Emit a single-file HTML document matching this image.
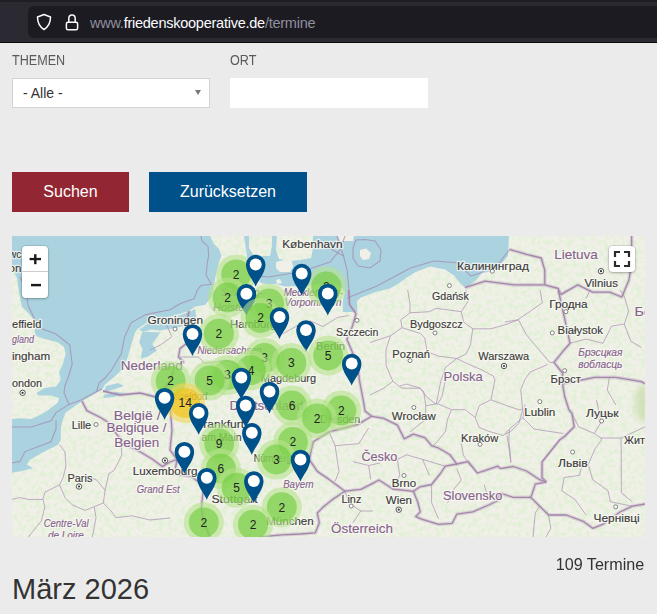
<!DOCTYPE html>
<html><head><meta charset="utf-8">
<style>
html,body{margin:0;padding:0;}
body{width:657px;height:614px;overflow:hidden;background:#ebebeb;font-family:"Liberation Sans",sans-serif;position:relative;}
.abs{position:absolute;}
#bar{left:0;top:0;width:657px;height:42px;background:#2b2a33;}
#bar .line{left:0;top:42px;width:657px;height:1px;background:#0c0c0d;}
#url{left:28px;top:6px;width:640px;height:32px;background:#1c1b22;border-radius:6px;}
#urltext{left:90px;top:15.4px;font-size:14.5px;color:#8f8f9d;white-space:nowrap;letter-spacing:-0.25px;}
#urltext b{font-weight:normal;color:#fbfbfe;}
.lbl{font-size:14px;color:#5a5a5a;top:51.5px;transform:scaleX(0.9);transform-origin:0 0;}
#sel{left:12px;top:78px;width:196px;height:28px;background:#fff;border:1px solid #d3d3d3;}
#sel span{position:absolute;left:10px;top:6px;font-size:14px;color:#333;}
#sel i{position:absolute;right:8.5px;top:11px;width:0;height:0;border-left:3.8px solid transparent;border-right:3.8px solid transparent;border-top:5.5px solid #777;}
#ort{left:230px;top:78px;width:198px;height:30px;background:#fff;}
.btn{top:172px;height:40px;color:#fff;font-size:16px;text-align:center;line-height:39px;}
#b1{left:12px;width:117px;background:#922733;}
#b2{left:149px;width:158px;background:#00508a;}
#map{left:12px;top:236px;width:633px;height:301px;background:#aad3df;overflow:hidden;}
#count{right:12.5px;top:554.8px;font-size:17px;color:#333;transform:scaleX(0.95);transform-origin:100% 0;}
#month{left:12px;top:573px;font-size:29px;color:#333;}
#zc{left:10px;top:10px;width:26px;height:52px;background:#fff;border-radius:4px;box-shadow:0 0 0 1px rgba(0,0,0,0.08),0 1px 3px rgba(0,0,0,0.25);}
#zc .zb{height:26px;line-height:26px;text-align:center;font-size:20px;font-weight:bold;color:#000;}
#zc .zb:first-child{border-bottom:1px solid #ccc;height:25px;}
#fs{left:597px;top:10px;width:26px;height:26px;background:#fff;border-radius:4px;box-shadow:0 0 0 1px rgba(0,0,0,0.08),0 1px 3px rgba(0,0,0,0.25);}
</style></head><body>
<div id="bar" class="abs">
  <div class="abs" style="left:0;top:0;width:657px;height:2px;background:#1f1e25"></div><div id="url" class="abs"></div>
  <div class="line abs"></div>
  <svg class="abs" style="left:34px;top:12px" width="20" height="20" viewBox="0 0 20 20"><path d="M10 2.5 L16.5 5 Q16.5 13.5 10 17.5 Q3.5 13.5 3.5 5 Z" fill="none" stroke="#fbfbfe" stroke-width="1.5" stroke-linejoin="round"/></svg>
  <svg class="abs" style="left:64px;top:12px" width="16" height="20" viewBox="0 0 16 20"><rect x="2.4" y="10.2" width="11.2" height="7.6" rx="1.6" fill="none" stroke="#fbfbfe" stroke-width="1.5"/><path d="M4.8 10.2 V6.6 Q4.8 3 8 3 Q11.2 3 11.2 6.6 V10.2" fill="none" stroke="#fbfbfe" stroke-width="1.5"/></svg>
  <div id="urltext" class="abs">www.<b>friedenskooperative.de</b>/termine</div>
</div>
<div class="abs lbl" style="left:12px">THEMEN</div>
<div class="abs lbl" style="left:230px">ORT</div>
<div id="sel" class="abs"><span>- Alle -</span><i></i></div>
<div id="ort" class="abs"></div>
<div id="b1" class="abs btn">Suchen</div>
<div id="b2" class="abs btn">Zurücksetzen</div>
<div id="map" class="abs">
<svg width="633" height="301" viewBox="12 236 633 301" style="position:absolute;left:0;top:0">
<rect x="12" y="236" width="633" height="301" fill="#f1f0e8"/>
<filter id="tex" x="0" y="0" width="100%" height="100%"><feTurbulence type="fractalNoise" baseFrequency="0.22" numOctaves="3" seed="7"/><feColorMatrix type="matrix" values="0 0 0 0 0.76  0 0 0 0 0.87  0 0 0 0 0.68  4.5 0 0 0 -1.95"/></filter>
<rect x="12" y="236" width="633" height="301" filter="url(#tex)"/>
<filter id="bl" x="-50%" y="-50%" width="200%" height="200%"><feGaussianBlur stdDeviation="3"/></filter><ellipse cx="643" cy="403" rx="8" ry="19" fill="#c6dca8" opacity="0.7" filter="url(#bl)"/>
<polygon points="12,236 210,236 214,244 219,249 221.5,255.5 219,262 216.5,272 214,284 212,296 205,305 195,306.5 190,310.5 173,316 149,321 137.6,329 135,332.5 131,345.6 127.8,357 122.9,368.4 114.8,376.5 105,384.6 102,389.8 82,401.2 65.7,412.6 62.5,420.7 60.8,428.8 60.8,440.2 57.6,445.1 44.5,451.6 29.9,459.8 26.6,464.6 33.2,468 21.8,471.1 12,472.8 12,419 20,418.2 31.5,419 41.3,414.2 49.4,409.3 57.6,402.8 59.2,397.9 51,395.5 38,395.5 36.4,393 44.5,388 56,386.5 60.8,380 59,372 62.5,365 65.7,353.7 64,347 57.6,342.3 44.6,339 36,336 34.8,332.6 34.8,321 28.3,313 22,307 19,292 17,278 12,268" fill="#aad3df"/>
<polygon points="244,236 249,236 249,248 254,256 270,256 272,246 272,236 277,236 276,250 279,259 290,261 300,260 311,258 312.7,250 313,236 509,236 508,256 502,263 494,271 482,273 476,280 470,285 465,287.7 460,283 454,275.6 445,269.5 430,266.4 415.8,272 406.7,277.4 399.4,282.9 390.3,288.4 375.7,292 361,297.5 357,301 357.4,312 342.8,312 342.8,301 345,292 339,285 325,284 312,285 300,286 285,286.5 276,284 266,284 261,283 254,272 248,262 246,250" fill="#aad3df"/>
<polygon points="195,309 190,311.5 173,317.5 149,322.5 139,330 143,331.5 152,329.5 160,330.5 175,328 188,325 197,320" fill="#aad3df"/>
<polygon points="142.4,331.5 160.3,332.5 152.2,344 157,350.5 147.3,357 140.8,358.6 142.4,348.8 139.2,342.3" fill="#aad3df"/>
<polygon points="106,386 118,383 124,386 112,390 104,392" fill="#aad3df"/>
<polygon points="104,395 116,392 126,393 114,397 103,398" fill="#aad3df"/>
<polygon points="360,250 366,248.6 371,253 369,259 363,260 360,256" fill="#f1f0e8"/>
<polygon points="276,262 284,260 292,261 293,267 290,272 280,272 276,268" fill="#f1f0e8"/>
<polygon points="276,280 280,279 282,283 277,284" fill="#f1f0e8"/>
<polygon points="338,236 354,236 353,241 340,241" fill="#f1f0e8"/>
<polyline points="180,303.8 170,309.8 145.7,314.6 131,322.8 124.5,337.4 121.3,353.7 111.5,370 105,378 99,383 96.6,391.4" fill="none" stroke="#a48bb0" stroke-opacity="0.75" stroke-width="1.1"/>
<polyline points="20,277 26,290 28,305 34,318 40,328 56,334 69.7,344.7 72.2,364.2 69,375 64.9,386 64,393 69,404.4 56,412.6 51,420.7 31.5,427 12,427" fill="none" stroke="#a48bb0" stroke-opacity="0.75" stroke-width="1.1"/>
<polyline points="12,463 20,461.4 25,451.6 51,441.8 56,428.8 56,420" fill="none" stroke="#a48bb0" stroke-opacity="0.75" stroke-width="1.1"/>
<polyline points="69,404.4 80.4,400.3 96.6,391.4 102,389" fill="none" stroke="#a48bb0" stroke-opacity="0.75" stroke-width="1.1"/>
<polyline points="200.8,236 202,241 208,246.4 208.7,255.5 207.4,262 206,275 211.3,284.2 200.8,285.5 197,290.7 194.3,298.5 180,303.8" fill="none" stroke="#a48bb0" stroke-opacity="0.75" stroke-width="1.1"/>
<polyline points="337,236 343.5,256 347,269.5 350,299.6" fill="none" stroke="#a48bb0" stroke-opacity="0.75" stroke-width="1.1"/>
<polyline points="347,298 377,286 410.5,268 434,261 457,262.8 470.8,276 481,272.8 500,262 509,250" fill="none" stroke="#a48bb0" stroke-opacity="0.75" stroke-width="1.1"/>
<polyline points="320,242.7 343.5,256" fill="none" stroke="#a48bb0" stroke-opacity="0.75" stroke-width="1.1"/>
<polyline points="353,248 356,240 365,239.5 375,241 381,250 380,261 370,268 358,266 353,258 353,248" fill="none" stroke="#a48bb0" stroke-opacity="0.75" stroke-width="1.1"/>
<polyline points="248,275 268,277 300,272 330,262 340,250 345,236" fill="none" stroke="#a48bb0" stroke-opacity="0.75" stroke-width="1.1"/>
<polyline points="456.8,358.5 465.9,363 481.9,370 493.3,376 495,380 493,389.9 491,399.8 479.2,405.7 475.2,417.6 465.3,409.7 451.5,409.7 437.6,403.7" fill="none" stroke="#ad95b5" stroke-opacity="0.8" stroke-width="0.95" stroke-linejoin="round"/>
<polyline points="547.6,364.6 530,372 524.7,380 520.7,389.9 522.7,409.7 518.7,423.5 510.8,431.4 502.9,435.4 489,431.4 479.2,427.5 475.2,417.6" fill="none" stroke="#ad95b5" stroke-opacity="0.8" stroke-width="0.95" stroke-linejoin="round"/>
<polyline points="445.5,380 441.6,397.8 437.6,403.7 425.7,405.7 423.8,391.9 419.8,387.9 406,384 400,386" fill="none" stroke="#ad95b5" stroke-opacity="0.8" stroke-width="0.95" stroke-linejoin="round"/>
<polyline points="451.5,409.7 447.5,419.6 445.5,431.4 437.6,441.3 433.6,445.3" fill="none" stroke="#ad95b5" stroke-opacity="0.8" stroke-width="0.95" stroke-linejoin="round"/>
<polyline points="491,399.8 506.9,405.7 518.7,409.7 522.7,409.7" fill="none" stroke="#ad95b5" stroke-opacity="0.8" stroke-width="0.95" stroke-linejoin="round"/>
<polyline points="506.9,435.4 508.9,447.3 510.8,463" fill="none" stroke="#ad95b5" stroke-opacity="0.8" stroke-width="0.95" stroke-linejoin="round"/>
<polyline points="461.4,443.3 463.3,455.1 471.2,467" fill="none" stroke="#ad95b5" stroke-opacity="0.8" stroke-width="0.95" stroke-linejoin="round"/>
<polyline points="425.7,405.7 425.7,419.6 416,427 410,432" fill="none" stroke="#ad95b5" stroke-opacity="0.8" stroke-width="0.95" stroke-linejoin="round"/>
<polyline points="180,357 198.6,357 205,363.6 225.3,360 240,365 250,380" fill="none" stroke="#ad95b5" stroke-opacity="0.8" stroke-width="0.95" stroke-linejoin="round"/>
<polyline points="282.9,333.8 295.7,326.5 310.3,321 323,326.5 337.7,317.4 348.6,315.6" fill="none" stroke="#ad95b5" stroke-opacity="0.8" stroke-width="0.95" stroke-linejoin="round"/>
<polyline points="166.7,325 171.8,336.8 160,345.2 150,350" fill="none" stroke="#ad95b5" stroke-opacity="0.8" stroke-width="0.95" stroke-linejoin="round"/>
<polyline points="407.7,290 410,303.7 410,312.8 400.8,319.7 402,327.7 390.5,335.7 370,342.5" fill="none" stroke="#ad95b5" stroke-opacity="0.8" stroke-width="0.95" stroke-linejoin="round"/>
<polyline points="410,312.8 429.4,311.7 436.2,308.3 461.3,311.7 463.6,322 472.7,328.8 470.5,344.8 465.9,354 456.8,358.5 438.5,356.2 427,351.6 424.8,338 420.2,333.4 402,327.7" fill="none" stroke="#ad95b5" stroke-opacity="0.8" stroke-width="0.95" stroke-linejoin="round"/>
<polyline points="390.5,335.7 386,349.4 386,365.3 392.8,381.3 402,388.2 420.2,388.2 427,397.3 436.2,404.2 440.8,381.3 445.3,367.6 456.8,358.5" fill="none" stroke="#ad95b5" stroke-opacity="0.8" stroke-width="0.95" stroke-linejoin="round"/>
<polyline points="461.3,311.7 468,301.4 466,290" fill="none" stroke="#ad95b5" stroke-opacity="0.8" stroke-width="0.95" stroke-linejoin="round"/>
<polyline points="472.7,328.8 491,328.8 507,324.2 518.4,319.7 526.3,334.7 537,347.5 549.7,362.4 554,362.4" fill="none" stroke="#ad95b5" stroke-opacity="0.8" stroke-width="0.95" stroke-linejoin="round"/>
<polyline points="505,322 517.8,319.8 542.3,302.8 540,290" fill="none" stroke="#ad95b5" stroke-opacity="0.8" stroke-width="0.95" stroke-linejoin="round"/>
<polyline points="370,395 383.7,388.2 392.8,381.3" fill="none" stroke="#ad95b5" stroke-opacity="0.8" stroke-width="0.95" stroke-linejoin="round"/>
<polyline points="586,298.5 590.2,290" fill="none" stroke="#ad95b5" stroke-opacity="0.8" stroke-width="0.95" stroke-linejoin="round"/>
<polyline points="570,343.3 586,339 603,343.3 611.5,326.2 624.3,324 628.6,311.3 624.3,296.4 620,290" fill="none" stroke="#ad95b5" stroke-opacity="0.8" stroke-width="0.95" stroke-linejoin="round"/>
<polyline points="624.3,324 630.7,341.1 641.4,347.5" fill="none" stroke="#ad95b5" stroke-opacity="0.8" stroke-width="0.95" stroke-linejoin="round"/>
<polyline points="609.4,377.4 607.3,390 615.8,405" fill="none" stroke="#ad95b5" stroke-opacity="0.8" stroke-width="0.95" stroke-linejoin="round"/>
<polyline points="370,457 397.4,459.4 406.5,454.8 422.5,459.4 445.3,466.2" fill="none" stroke="#ad95b5" stroke-opacity="0.8" stroke-width="0.95" stroke-linejoin="round"/>
<polyline points="397.4,459.4 399.7,475.3 392.8,489" fill="none" stroke="#ad95b5" stroke-opacity="0.8" stroke-width="0.95" stroke-linejoin="round"/>
<polyline points="422.5,459.4 429.4,475.3" fill="none" stroke="#ad95b5" stroke-opacity="0.8" stroke-width="0.95" stroke-linejoin="round"/>
<polyline points="456.8,468.5 461.3,480 452.2,491.3 447.6,502.7" fill="none" stroke="#ad95b5" stroke-opacity="0.8" stroke-width="0.95" stroke-linejoin="round"/>
<polyline points="431.6,484.5 431.6,502.7 438.5,518.7" fill="none" stroke="#ad95b5" stroke-opacity="0.8" stroke-width="0.95" stroke-linejoin="round"/>
<polyline points="484.2,484.5 488.7,500.5" fill="none" stroke="#ad95b5" stroke-opacity="0.8" stroke-width="0.95" stroke-linejoin="round"/>
<polyline points="572,413.4 578.7,426.8 594.3,433.5 601,438 601.5,440 595,448.8 588.3,464.3 581.7,466.5 579.5,475.3 564,477.5 561.8,490.8 575,499.6 586,515" fill="none" stroke="#ad95b5" stroke-opacity="0.8" stroke-width="0.95" stroke-linejoin="round"/>
<polyline points="588.3,464.3 592.7,479.7 608.1,490.8 610.4,501.8 632.4,506.2" fill="none" stroke="#ad95b5" stroke-opacity="0.8" stroke-width="0.95" stroke-linejoin="round"/>
<polyline points="539.7,506.2 535.3,512.8 533,537" fill="none" stroke="#ad95b5" stroke-opacity="0.8" stroke-width="0.95" stroke-linejoin="round"/>
<polyline points="548.6,515 550.8,528.3 546,537" fill="none" stroke="#ad95b5" stroke-opacity="0.8" stroke-width="0.95" stroke-linejoin="round"/>
<polyline points="601,438 621.1,438 645,426.8" fill="none" stroke="#ad95b5" stroke-opacity="0.8" stroke-width="0.95" stroke-linejoin="round"/>
<polyline points="621.1,438 621.4,493 632.4,501.8" fill="none" stroke="#ad95b5" stroke-opacity="0.8" stroke-width="0.95" stroke-linejoin="round"/>
<polyline points="596.5,400 601,422.3 594.3,433.5" fill="none" stroke="#ad95b5" stroke-opacity="0.8" stroke-width="0.95" stroke-linejoin="round"/>
<polyline points="505,433.5 509.5,429 522.9,417.9 534,429 563,433.5" fill="none" stroke="#ad95b5" stroke-opacity="0.8" stroke-width="0.95" stroke-linejoin="round"/>
<polyline points="509.5,429 508.8,440 511,462" fill="none" stroke="#ad95b5" stroke-opacity="0.8" stroke-width="0.95" stroke-linejoin="round"/>
<polyline points="522.9,417.9 525,404.5" fill="none" stroke="#ad95b5" stroke-opacity="0.8" stroke-width="0.95" stroke-linejoin="round"/>
<polyline points="329.1,431.9 335.1,445.7 339,471.4 335.1,481.3" fill="none" stroke="#ad95b5" stroke-opacity="0.8" stroke-width="0.95" stroke-linejoin="round"/>
<polyline points="335.1,445.7 358.8,443.7 368.7,428" fill="none" stroke="#ad95b5" stroke-opacity="0.8" stroke-width="0.95" stroke-linejoin="round"/>
<polyline points="352.9,461.6 368.7,465.5 380,463" fill="none" stroke="#ad95b5" stroke-opacity="0.8" stroke-width="0.95" stroke-linejoin="round"/>
<polyline points="368.7,465.5 370.7,479.4" fill="none" stroke="#ad95b5" stroke-opacity="0.8" stroke-width="0.95" stroke-linejoin="round"/>
<polyline points="345,491.2 349,503.1 360.8,511 372.7,511" fill="none" stroke="#ad95b5" stroke-opacity="0.8" stroke-width="0.95" stroke-linejoin="round"/>
<polyline points="360.8,511 352.9,522.9" fill="none" stroke="#ad95b5" stroke-opacity="0.8" stroke-width="0.95" stroke-linejoin="round"/>
<polyline points="59.5,444.6 65,452 65.9,466.5 63.1,477.5 59.5,484.8 44.9,492.1 43,499.4 28.4,499.4 19.3,497.6 12,499.4" fill="none" stroke="#ad95b5" stroke-opacity="0.8" stroke-width="0.95" stroke-linejoin="round"/>
<polyline points="59.5,484.8 65,497.6 72.3,504.9 85,510.4 94.2,506.7 103.3,503 105.1,490.3 96,479.3 85,477" fill="none" stroke="#ad95b5" stroke-opacity="0.8" stroke-width="0.95" stroke-linejoin="round"/>
<polyline points="121.6,441 121.6,455.6 114.3,470.2 108.8,473.8 105.1,490.3" fill="none" stroke="#ad95b5" stroke-opacity="0.8" stroke-width="0.95" stroke-linejoin="round"/>
<polyline points="94.2,506.7 96,517.7 92.4,537" fill="none" stroke="#ad95b5" stroke-opacity="0.8" stroke-width="0.95" stroke-linejoin="round"/>
<polyline points="43,499.4 44.9,506.7 41.2,521.3 32.1,532.3 28.4,537" fill="none" stroke="#ad95b5" stroke-opacity="0.8" stroke-width="0.95" stroke-linejoin="round"/>
<polyline points="103.3,503 110.6,510.4 116.1,517.7 132,515.8 150,520 170,518" fill="none" stroke="#ad95b5" stroke-opacity="0.8" stroke-width="0.95" stroke-linejoin="round"/>
<polyline points="82,401 86.8,410.6 101.4,418 108.7,422.8 118,436 125.8,444.7 140.4,452 152.5,459.3 162.3,466.6 170,462 177,459.3 174.5,474 191.5,476.4 203.7,486 201.3,508 203.7,522.6 210,537" fill="none" stroke="#c2aac6" stroke-opacity="0.45" stroke-width="3.6" stroke-linejoin="round"/>
<polyline points="82,401 86.8,410.6 101.4,418 108.7,422.8 118,436 125.8,444.7 140.4,452 152.5,459.3 162.3,466.6 170,462 177,459.3 174.5,474 191.5,476.4 203.7,486 201.3,508 203.7,522.6 210,537" fill="none" stroke="#9d80a5" stroke-opacity="0.9" stroke-width="1.3" stroke-linejoin="round"/>
<polyline points="103,391 120,395 140,393 160,398 170,405" fill="none" stroke="#c2aac6" stroke-opacity="0.45" stroke-width="3.6" stroke-linejoin="round"/>
<polyline points="103,391 120,395 140,393 160,398 170,405" fill="none" stroke="#9d80a5" stroke-opacity="0.9" stroke-width="1.3" stroke-linejoin="round"/>
<polyline points="189,311 186,325 188.5,341.9 180,348.6 178.5,357 183.5,362 173.4,367 171.8,378.7 165,388 170,405" fill="none" stroke="#c2aac6" stroke-opacity="0.45" stroke-width="3.6" stroke-linejoin="round"/>
<polyline points="189,311 186,325 188.5,341.9 180,348.6 178.5,357 183.5,362 173.4,367 171.8,378.7 165,388 170,405" fill="none" stroke="#9d80a5" stroke-opacity="0.9" stroke-width="1.3" stroke-linejoin="round"/>
<polyline points="170,405 172,430 170,450 177,459.3" fill="none" stroke="#c2aac6" stroke-opacity="0.45" stroke-width="3.6" stroke-linejoin="round"/>
<polyline points="170,405 172,430 170,450 177,459.3" fill="none" stroke="#9d80a5" stroke-opacity="0.9" stroke-width="1.3" stroke-linejoin="round"/>
<polyline points="348.6,290 349.5,304.6 356,313.7 352.3,326.5 346.8,339.3 352.3,352 357.8,366.7 359.6,381.3 363.2,400 365,411 371.7,416.3" fill="none" stroke="#c2aac6" stroke-opacity="0.45" stroke-width="3.6" stroke-linejoin="round"/>
<polyline points="348.6,290 349.5,304.6 356,313.7 352.3,326.5 346.8,339.3 352.3,352 357.8,366.7 359.6,381.3 363.2,400 365,411 371.7,416.3" fill="none" stroke="#9d80a5" stroke-opacity="0.9" stroke-width="1.3" stroke-linejoin="round"/>
<polyline points="371.7,416.3 383.7,418.3 397.4,425.1 404.2,438.8 413.4,434.2 424.8,437.7 431.6,445.7 438.5,448 450,454.8 456.8,464 468.2,461.6 477.3,473 484.2,470.8 497.9,466.2 500,468.7" fill="none" stroke="#c2aac6" stroke-opacity="0.45" stroke-width="3.6" stroke-linejoin="round"/>
<polyline points="371.7,416.3 383.7,418.3 397.4,425.1 404.2,438.8 413.4,434.2 424.8,437.7 431.6,445.7 438.5,448 450,454.8 456.8,464 468.2,461.6 477.3,473 484.2,470.8 497.9,466.2 500,468.7" fill="none" stroke="#9d80a5" stroke-opacity="0.9" stroke-width="1.3" stroke-linejoin="round"/>
<polyline points="371.7,416.3 358,424.4 336.3,430 329.1,431.9 313.3,441.8 311.3,449.7 309.4,459.6 317.3,471.4 329.1,479.4 337,485.3 345,491.2" fill="none" stroke="#c2aac6" stroke-opacity="0.45" stroke-width="3.6" stroke-linejoin="round"/>
<polyline points="371.7,416.3 358,424.4 336.3,430 329.1,431.9 313.3,441.8 311.3,449.7 309.4,459.6 317.3,471.4 329.1,479.4 337,485.3 345,491.2" fill="none" stroke="#9d80a5" stroke-opacity="0.9" stroke-width="1.3" stroke-linejoin="round"/>
<polyline points="345,491.2 360.8,489.3 372.7,483.3 379,480 392.8,489 413.4,491.3" fill="none" stroke="#c2aac6" stroke-opacity="0.45" stroke-width="3.6" stroke-linejoin="round"/>
<polyline points="345,491.2 360.8,489.3 372.7,483.3 379,480 392.8,489 413.4,491.3" fill="none" stroke="#9d80a5" stroke-opacity="0.9" stroke-width="1.3" stroke-linejoin="round"/>
<polyline points="345,491.2 333.1,499.1 323.2,507 317.3,513 319.3,522.9 315.3,532.8 300,534 281.7,534.8 260,537" fill="none" stroke="#c2aac6" stroke-opacity="0.45" stroke-width="3.6" stroke-linejoin="round"/>
<polyline points="345,491.2 333.1,499.1 323.2,507 317.3,513 319.3,522.9 315.3,532.8 300,534 281.7,534.8 260,537" fill="none" stroke="#9d80a5" stroke-opacity="0.9" stroke-width="1.3" stroke-linejoin="round"/>
<polyline points="413.4,491.3 420.2,486.8 431.6,484.5 440.8,473 445.3,466.2 456.8,464" fill="none" stroke="#c2aac6" stroke-opacity="0.45" stroke-width="3.6" stroke-linejoin="round"/>
<polyline points="413.4,491.3 420.2,486.8 431.6,484.5 440.8,473 445.3,466.2 456.8,464" fill="none" stroke="#9d80a5" stroke-opacity="0.9" stroke-width="1.3" stroke-linejoin="round"/>
<polyline points="413.4,491.3 418,502.7 420.2,511.9 415.7,516.4 420.2,518.7 438.5,524.4 452.2,523.3 456.8,514.2 472.7,511.9 488.7,505 497.9,500.5 500,493" fill="none" stroke="#c2aac6" stroke-opacity="0.45" stroke-width="3.6" stroke-linejoin="round"/>
<polyline points="413.4,491.3 418,502.7 420.2,511.9 415.7,516.4 420.2,518.7 438.5,524.4 452.2,523.3 456.8,514.2 472.7,511.9 488.7,505 497.9,500.5 500,493" fill="none" stroke="#9d80a5" stroke-opacity="0.9" stroke-width="1.3" stroke-linejoin="round"/>
<polyline points="569,410 572,413.4 574.2,426.8 565.3,435.7 559.6,440 542,462 542,477.5 546.3,482" fill="none" stroke="#c2aac6" stroke-opacity="0.45" stroke-width="3.6" stroke-linejoin="round"/>
<polyline points="569,410 572,413.4 574.2,426.8 565.3,435.7 559.6,440 542,462 542,477.5 546.3,482" fill="none" stroke="#9d80a5" stroke-opacity="0.9" stroke-width="1.3" stroke-linejoin="round"/>
<polyline points="546.3,482 535.3,484.1 530.9,497.4 539.7,506.2 548.6,515 566.2,515 583.9,521.7 592.7,528.3 603.7,523.9 620,512 632.4,506.2 645,504" fill="none" stroke="#c2aac6" stroke-opacity="0.45" stroke-width="3.6" stroke-linejoin="round"/>
<polyline points="546.3,482 535.3,484.1 530.9,497.4 539.7,506.2 548.6,515 566.2,515 583.9,521.7 592.7,528.3 603.7,523.9 620,512 632.4,506.2 645,504" fill="none" stroke="#9d80a5" stroke-opacity="0.9" stroke-width="1.3" stroke-linejoin="round"/>
<polyline points="500,468.7 513.2,466.5 526.5,471 539.7,479.7 546.3,482" fill="none" stroke="#c2aac6" stroke-opacity="0.45" stroke-width="3.6" stroke-linejoin="round"/>
<polyline points="500,468.7 513.2,466.5 526.5,471 539.7,479.7 546.3,482" fill="none" stroke="#9d80a5" stroke-opacity="0.9" stroke-width="1.3" stroke-linejoin="round"/>
<polyline points="500,493 513.2,497.4 530.9,497.4" fill="none" stroke="#c2aac6" stroke-opacity="0.45" stroke-width="3.6" stroke-linejoin="round"/>
<polyline points="500,493 513.2,497.4 530.9,497.4" fill="none" stroke="#9d80a5" stroke-opacity="0.9" stroke-width="1.3" stroke-linejoin="round"/>
<polyline points="562.5,383.8 594.5,377.4 615.8,377.4 641.4,381.6 645,383.8" fill="none" stroke="#c2aac6" stroke-opacity="0.45" stroke-width="3.6" stroke-linejoin="round"/>
<polyline points="562.5,383.8 594.5,377.4 615.8,377.4 641.4,381.6 645,383.8" fill="none" stroke="#9d80a5" stroke-opacity="0.9" stroke-width="1.3" stroke-linejoin="round"/>
<polyline points="465,287.7 485,281.2 514.3,284.9 544.8,284.9" fill="none" stroke="#c2aac6" stroke-opacity="0.45" stroke-width="3.6" stroke-linejoin="round"/>
<polyline points="465,287.7 485,281.2 514.3,284.9 544.8,284.9" fill="none" stroke="#9d80a5" stroke-opacity="0.9" stroke-width="1.3" stroke-linejoin="round"/>
<polyline points="509.4,249.4 526.5,254.3 541.2,258 544.8,270.2 544.8,284.9" fill="none" stroke="#c2aac6" stroke-opacity="0.45" stroke-width="3.6" stroke-linejoin="round"/>
<polyline points="509.4,249.4 526.5,254.3 541.2,258 544.8,270.2 544.8,284.9" fill="none" stroke="#9d80a5" stroke-opacity="0.9" stroke-width="1.3" stroke-linejoin="round"/>
<polyline points="544.8,284.9 558.3,288.5 560.7,294.6" fill="none" stroke="#c2aac6" stroke-opacity="0.45" stroke-width="3.6" stroke-linejoin="round"/>
<polyline points="544.8,284.9 558.3,288.5 560.7,294.6" fill="none" stroke="#9d80a5" stroke-opacity="0.9" stroke-width="1.3" stroke-linejoin="round"/>
<polyline points="558.3,290 562.5,309.2 566.8,328.4 570,343.3 562.5,351.8 554,362.4 562.5,373 562.5,383.8 564.7,396.5 569,410" fill="none" stroke="#c2aac6" stroke-opacity="0.45" stroke-width="3.6" stroke-linejoin="round"/>
<polyline points="558.3,290 562.5,309.2 566.8,328.4 570,343.3 562.5,351.8 554,362.4 562.5,373 562.5,383.8 564.7,396.5 569,410" fill="none" stroke="#9d80a5" stroke-opacity="0.9" stroke-width="1.3" stroke-linejoin="round"/>
<polyline points="560.7,294.6 577.8,284.9 592.5,292.2 609.6,292.2 621.8,297 629,280 631.6,262.9 631.6,236" fill="none" stroke="#c2aac6" stroke-opacity="0.45" stroke-width="3.6" stroke-linejoin="round"/>
<polyline points="560.7,294.6 577.8,284.9 592.5,292.2 609.6,292.2 621.8,297 629,280 631.6,262.9 631.6,236" fill="none" stroke="#9d80a5" stroke-opacity="0.9" stroke-width="1.3" stroke-linejoin="round"/>
<text x="9" y="258" textLength="12.3" lengthAdjust="spacingAndGlyphs" font-size="11.5" fill="none" stroke="#f8f8f2" stroke-opacity="0.8" stroke-width="2.4" stroke-linejoin="round">wc</text>
<text x="9" y="258" textLength="12.3" lengthAdjust="spacingAndGlyphs" font-size="11.5" fill="#3a3a3a" stroke="#3a3a3a" stroke-width="0.12">wc</text>
<text x="8.5" y="271.6" textLength="12.8" lengthAdjust="spacingAndGlyphs" font-size="11.5" fill="none" stroke="#f8f8f2" stroke-opacity="0.8" stroke-width="2.4" stroke-linejoin="round">on</text>
<text x="8.5" y="271.6" textLength="12.8" lengthAdjust="spacingAndGlyphs" font-size="11.5" fill="#3a3a3a" stroke="#3a3a3a" stroke-width="0.12">on</text>
<text x="12" y="327.7" textLength="29.3" lengthAdjust="spacingAndGlyphs" font-size="10.2" fill="none" stroke="#f8f8f2" stroke-opacity="0.8" stroke-width="2.4" stroke-linejoin="round">effield</text>
<text x="12" y="327.7" textLength="29.3" lengthAdjust="spacingAndGlyphs" font-size="10.2" fill="#3a3a3a" stroke="#3a3a3a" stroke-width="0.12">effield</text>
<text x="12" y="359.5" textLength="38.3" lengthAdjust="spacingAndGlyphs" font-size="10.2" fill="none" stroke="#f8f8f2" stroke-opacity="0.8" stroke-width="2.4" stroke-linejoin="round">ingham</text>
<text x="12" y="359.5" textLength="38.3" lengthAdjust="spacingAndGlyphs" font-size="10.2" fill="#3a3a3a" stroke="#3a3a3a" stroke-width="0.12">ingham</text>
<text x="12" y="387" textLength="30.0" lengthAdjust="spacingAndGlyphs" font-size="10.2" fill="none" stroke="#f8f8f2" stroke-opacity="0.8" stroke-width="2.4" stroke-linejoin="round">ondon</text>
<text x="12" y="387" textLength="30.0" lengthAdjust="spacingAndGlyphs" font-size="10.2" fill="#3a3a3a" stroke="#3a3a3a" stroke-width="0.12">ondon</text>
<text x="71.7" y="429.4" textLength="19.5" lengthAdjust="spacingAndGlyphs" font-size="10.2" fill="none" stroke="#f8f8f2" stroke-opacity="0.8" stroke-width="2.4" stroke-linejoin="round">Lille</text>
<text x="71.7" y="429.4" textLength="19.5" lengthAdjust="spacingAndGlyphs" font-size="10.2" fill="#3a3a3a" stroke="#3a3a3a" stroke-width="0.12">Lille</text>
<text x="67.5" y="482.2" textLength="24.9" lengthAdjust="spacingAndGlyphs" font-size="10.2" fill="none" stroke="#f8f8f2" stroke-opacity="0.8" stroke-width="2.4" stroke-linejoin="round">Paris</text>
<text x="67.5" y="482.2" textLength="24.9" lengthAdjust="spacingAndGlyphs" font-size="10.2" fill="#3a3a3a" stroke="#3a3a3a" stroke-width="0.12">Paris</text>
<text x="132.8" y="475" textLength="64.7" lengthAdjust="spacingAndGlyphs" font-size="10.2" fill="none" stroke="#f8f8f2" stroke-opacity="0.8" stroke-width="2.4" stroke-linejoin="round">Luxembourg</text>
<text x="132.8" y="475" textLength="64.7" lengthAdjust="spacingAndGlyphs" font-size="10.2" fill="#3a3a3a" stroke="#3a3a3a" stroke-width="0.12">Luxembourg</text>
<text x="147.6" y="323.8" textLength="55.4" lengthAdjust="spacingAndGlyphs" font-size="10.2" fill="none" stroke="#f8f8f2" stroke-opacity="0.8" stroke-width="2.4" stroke-linejoin="round">Groningen</text>
<text x="147.6" y="323.8" textLength="55.4" lengthAdjust="spacingAndGlyphs" font-size="10.2" fill="#3a3a3a" stroke="#3a3a3a" stroke-width="0.12">Groningen</text>
<text x="230" y="328" textLength="46.4" lengthAdjust="spacingAndGlyphs" font-size="10.2" fill="none" stroke="#f8f8f2" stroke-opacity="0.8" stroke-width="2.4" stroke-linejoin="round">Hamburg</text>
<text x="230" y="328" textLength="46.4" lengthAdjust="spacingAndGlyphs" font-size="10.2" fill="#3a3a3a" stroke="#3a3a3a" stroke-width="0.12">Hamburg</text>
<text x="163" y="399.5" textLength="44.5" lengthAdjust="spacingAndGlyphs" font-size="10.2" fill="none" stroke="#f8f8f2" stroke-opacity="0.8" stroke-width="2.4" stroke-linejoin="round">Düsseldorf</text>
<text x="163" y="399.5" textLength="44.5" lengthAdjust="spacingAndGlyphs" font-size="10.2" fill="#3a3a3a" stroke="#3a3a3a" stroke-width="0.12">Düsseldorf</text>
<text x="196" y="427.5" textLength="48.0" lengthAdjust="spacingAndGlyphs" font-size="10.2" fill="none" stroke="#f8f8f2" stroke-opacity="0.8" stroke-width="2.4" stroke-linejoin="round">Frankfurt</text>
<text x="196" y="427.5" textLength="48.0" lengthAdjust="spacingAndGlyphs" font-size="10.2" fill="#3a3a3a" stroke="#3a3a3a" stroke-width="0.12">Frankfurt</text>
<text x="201.4" y="441" textLength="40.2" lengthAdjust="spacingAndGlyphs" font-size="10.2" fill="none" stroke="#f8f8f2" stroke-opacity="0.8" stroke-width="2.4" stroke-linejoin="round">am Main</text>
<text x="201.4" y="441" textLength="40.2" lengthAdjust="spacingAndGlyphs" font-size="10.2" fill="#3a3a3a" stroke="#3a3a3a" stroke-width="0.12">am Main</text>
<text x="253.8" y="462" textLength="37.7" lengthAdjust="spacingAndGlyphs" font-size="10.2" fill="none" stroke="#f8f8f2" stroke-opacity="0.8" stroke-width="2.4" stroke-linejoin="round">Nürnberg</text>
<text x="253.8" y="462" textLength="37.7" lengthAdjust="spacingAndGlyphs" font-size="10.2" fill="#3a3a3a" stroke="#3a3a3a" stroke-width="0.12">Nürnberg</text>
<text x="211.4" y="503" textLength="46.3" lengthAdjust="spacingAndGlyphs" font-size="10.2" fill="none" stroke="#f8f8f2" stroke-opacity="0.8" stroke-width="2.4" stroke-linejoin="round">Stuttgart</text>
<text x="211.4" y="503" textLength="46.3" lengthAdjust="spacingAndGlyphs" font-size="10.2" fill="#3a3a3a" stroke="#3a3a3a" stroke-width="0.12">Stuttgart</text>
<text x="266.2" y="524.8" textLength="47.5" lengthAdjust="spacingAndGlyphs" font-size="10.2" fill="none" stroke="#f8f8f2" stroke-opacity="0.8" stroke-width="2.4" stroke-linejoin="round">München</text>
<text x="266.2" y="524.8" textLength="47.5" lengthAdjust="spacingAndGlyphs" font-size="10.2" fill="#3a3a3a" stroke="#3a3a3a" stroke-width="0.12">München</text>
<text x="260.8" y="381.5" textLength="55.2" lengthAdjust="spacingAndGlyphs" font-size="10.2" fill="none" stroke="#f8f8f2" stroke-opacity="0.8" stroke-width="2.4" stroke-linejoin="round">Magdeburg</text>
<text x="260.8" y="381.5" textLength="55.2" lengthAdjust="spacingAndGlyphs" font-size="10.2" fill="#3a3a3a" stroke="#3a3a3a" stroke-width="0.12">Magdeburg</text>
<text x="320" y="423" textLength="40.2" lengthAdjust="spacingAndGlyphs" font-size="10.2" fill="none" stroke="#f8f8f2" stroke-opacity="0.8" stroke-width="2.4" stroke-linejoin="round">Dresden</text>
<text x="320" y="423" textLength="40.2" lengthAdjust="spacingAndGlyphs" font-size="10.2" fill="#3a3a3a" stroke="#3a3a3a" stroke-width="0.12">Dresden</text>
<text x="316" y="350" textLength="29.0" lengthAdjust="spacingAndGlyphs" font-size="10.2" fill="none" stroke="#f8f8f2" stroke-opacity="0.8" stroke-width="2.4" stroke-linejoin="round">Berlin</text>
<text x="316" y="350" textLength="29.0" lengthAdjust="spacingAndGlyphs" font-size="10.2" fill="#3a3a3a" stroke="#3a3a3a" stroke-width="0.12">Berlin</text>
<text x="282.2" y="247.7" textLength="60.3" lengthAdjust="spacingAndGlyphs" font-size="10.2" fill="none" stroke="#f8f8f2" stroke-opacity="0.8" stroke-width="2.4" stroke-linejoin="round">København</text>
<text x="282.2" y="247.7" textLength="60.3" lengthAdjust="spacingAndGlyphs" font-size="10.2" fill="#3a3a3a" stroke="#3a3a3a" stroke-width="0.12">København</text>
<text x="336" y="335.5" textLength="42.3" lengthAdjust="spacingAndGlyphs" font-size="10.2" fill="none" stroke="#f8f8f2" stroke-opacity="0.8" stroke-width="2.4" stroke-linejoin="round">Szczecin</text>
<text x="336" y="335.5" textLength="42.3" lengthAdjust="spacingAndGlyphs" font-size="10.2" fill="#3a3a3a" stroke="#3a3a3a" stroke-width="0.12">Szczecin</text>
<text x="410" y="328.3" textLength="52.7" lengthAdjust="spacingAndGlyphs" font-size="10.2" fill="none" stroke="#f8f8f2" stroke-opacity="0.8" stroke-width="2.4" stroke-linejoin="round">Bydgoszcz</text>
<text x="410" y="328.3" textLength="52.7" lengthAdjust="spacingAndGlyphs" font-size="10.2" fill="#3a3a3a" stroke="#3a3a3a" stroke-width="0.12">Bydgoszcz</text>
<text x="392.3" y="358" textLength="37.7" lengthAdjust="spacingAndGlyphs" font-size="10.2" fill="none" stroke="#f8f8f2" stroke-opacity="0.8" stroke-width="2.4" stroke-linejoin="round">Poznań</text>
<text x="392.3" y="358" textLength="37.7" lengthAdjust="spacingAndGlyphs" font-size="10.2" fill="#3a3a3a" stroke="#3a3a3a" stroke-width="0.12">Poznań</text>
<text x="478.3" y="360" textLength="50.8" lengthAdjust="spacingAndGlyphs" font-size="10.2" fill="none" stroke="#f8f8f2" stroke-opacity="0.8" stroke-width="2.4" stroke-linejoin="round">Warszawa</text>
<text x="478.3" y="360" textLength="50.8" lengthAdjust="spacingAndGlyphs" font-size="10.2" fill="#3a3a3a" stroke="#3a3a3a" stroke-width="0.12">Warszawa</text>
<text x="391.8" y="420.4" textLength="43.9" lengthAdjust="spacingAndGlyphs" font-size="10.2" fill="none" stroke="#f8f8f2" stroke-opacity="0.8" stroke-width="2.4" stroke-linejoin="round">Wrocław</text>
<text x="391.8" y="420.4" textLength="43.9" lengthAdjust="spacingAndGlyphs" font-size="10.2" fill="#3a3a3a" stroke="#3a3a3a" stroke-width="0.12">Wrocław</text>
<text x="461" y="441.5" textLength="37.3" lengthAdjust="spacingAndGlyphs" font-size="10.2" fill="none" stroke="#f8f8f2" stroke-opacity="0.8" stroke-width="2.4" stroke-linejoin="round">Kraków</text>
<text x="461" y="441.5" textLength="37.3" lengthAdjust="spacingAndGlyphs" font-size="10.2" fill="#3a3a3a" stroke="#3a3a3a" stroke-width="0.12">Kraków</text>
<text x="391.8" y="487.4" textLength="24.4" lengthAdjust="spacingAndGlyphs" font-size="10.2" fill="none" stroke="#f8f8f2" stroke-opacity="0.8" stroke-width="2.4" stroke-linejoin="round">Brno</text>
<text x="391.8" y="487.4" textLength="24.4" lengthAdjust="spacingAndGlyphs" font-size="10.2" fill="#3a3a3a" stroke="#3a3a3a" stroke-width="0.12">Brno</text>
<text x="341.4" y="503" textLength="20.0" lengthAdjust="spacingAndGlyphs" font-size="10.2" fill="none" stroke="#f8f8f2" stroke-opacity="0.8" stroke-width="2.4" stroke-linejoin="round">Linz</text>
<text x="341.4" y="503" textLength="20.0" lengthAdjust="spacingAndGlyphs" font-size="10.2" fill="#3a3a3a" stroke="#3a3a3a" stroke-width="0.12">Linz</text>
<text x="385.8" y="504" textLength="26.2" lengthAdjust="spacingAndGlyphs" font-size="10.2" fill="none" stroke="#f8f8f2" stroke-opacity="0.8" stroke-width="2.4" stroke-linejoin="round">Wien</text>
<text x="385.8" y="504" textLength="26.2" lengthAdjust="spacingAndGlyphs" font-size="10.2" fill="#3a3a3a" stroke="#3a3a3a" stroke-width="0.12">Wien</text>
<text x="524.2" y="415.6" textLength="31.2" lengthAdjust="spacingAndGlyphs" font-size="10.2" fill="none" stroke="#f8f8f2" stroke-opacity="0.8" stroke-width="2.4" stroke-linejoin="round">Lublin</text>
<text x="524.2" y="415.6" textLength="31.2" lengthAdjust="spacingAndGlyphs" font-size="10.2" fill="#3a3a3a" stroke="#3a3a3a" stroke-width="0.12">Lublin</text>
<text x="586" y="417.2" textLength="32.5" lengthAdjust="spacingAndGlyphs" font-size="10.2" fill="none" stroke="#f8f8f2" stroke-opacity="0.8" stroke-width="2.4" stroke-linejoin="round">Луцьк</text>
<text x="586" y="417.2" textLength="32.5" lengthAdjust="spacingAndGlyphs" font-size="10.2" fill="#3a3a3a" stroke="#3a3a3a" stroke-width="0.12">Луцьк</text>
<text x="624" y="443.7" textLength="46.0" lengthAdjust="spacingAndGlyphs" font-size="10.2" fill="none" stroke="#f8f8f2" stroke-opacity="0.8" stroke-width="2.4" stroke-linejoin="round">Житомир</text>
<text x="624" y="443.7" textLength="46.0" lengthAdjust="spacingAndGlyphs" font-size="10.2" fill="#3a3a3a" stroke="#3a3a3a" stroke-width="0.12">Житомир</text>
<text x="558" y="466.5" textLength="29.6" lengthAdjust="spacingAndGlyphs" font-size="10.2" fill="none" stroke="#f8f8f2" stroke-opacity="0.8" stroke-width="2.4" stroke-linejoin="round">Львів</text>
<text x="558" y="466.5" textLength="29.6" lengthAdjust="spacingAndGlyphs" font-size="10.2" fill="#3a3a3a" stroke="#3a3a3a" stroke-width="0.12">Львів</text>
<text x="593.5" y="521.5" textLength="46.2" lengthAdjust="spacingAndGlyphs" font-size="10.2" fill="none" stroke="#f8f8f2" stroke-opacity="0.8" stroke-width="2.4" stroke-linejoin="round">Чернівці</text>
<text x="593.5" y="521.5" textLength="46.2" lengthAdjust="spacingAndGlyphs" font-size="10.2" fill="#3a3a3a" stroke="#3a3a3a" stroke-width="0.12">Чернівці</text>
<text x="457" y="269.5" textLength="72.0" lengthAdjust="spacingAndGlyphs" font-size="10.2" fill="none" stroke="#f8f8f2" stroke-opacity="0.8" stroke-width="2.4" stroke-linejoin="round">Калининград</text>
<text x="457" y="269.5" textLength="72.0" lengthAdjust="spacingAndGlyphs" font-size="10.2" fill="#3a3a3a" stroke="#3a3a3a" stroke-width="0.12">Калининград</text>
<text x="584.4" y="287" textLength="33.5" lengthAdjust="spacingAndGlyphs" font-size="10.2" fill="none" stroke="#f8f8f2" stroke-opacity="0.8" stroke-width="2.4" stroke-linejoin="round">Vilnius</text>
<text x="584.4" y="287" textLength="33.5" lengthAdjust="spacingAndGlyphs" font-size="10.2" fill="#3a3a3a" stroke="#3a3a3a" stroke-width="0.12">Vilnius</text>
<text x="432" y="299.6" textLength="36.8" lengthAdjust="spacingAndGlyphs" font-size="10.2" fill="none" stroke="#f8f8f2" stroke-opacity="0.8" stroke-width="2.4" stroke-linejoin="round">Gdańsk</text>
<text x="432" y="299.6" textLength="36.8" lengthAdjust="spacingAndGlyphs" font-size="10.2" fill="#3a3a3a" stroke="#3a3a3a" stroke-width="0.12">Gdańsk</text>
<text x="549.2" y="307.5" textLength="38.5" lengthAdjust="spacingAndGlyphs" font-size="10.2" fill="none" stroke="#f8f8f2" stroke-opacity="0.8" stroke-width="2.4" stroke-linejoin="round">Гродна</text>
<text x="549.2" y="307.5" textLength="38.5" lengthAdjust="spacingAndGlyphs" font-size="10.2" fill="#3a3a3a" stroke="#3a3a3a" stroke-width="0.12">Гродна</text>
<text x="557.6" y="334" textLength="45.4" lengthAdjust="spacingAndGlyphs" font-size="10.2" fill="none" stroke="#f8f8f2" stroke-opacity="0.8" stroke-width="2.4" stroke-linejoin="round">Białystok</text>
<text x="557.6" y="334" textLength="45.4" lengthAdjust="spacingAndGlyphs" font-size="10.2" fill="#3a3a3a" stroke="#3a3a3a" stroke-width="0.12">Białystok</text>
<text x="550.6" y="383.3" textLength="30.2" lengthAdjust="spacingAndGlyphs" font-size="10.2" fill="none" stroke="#f8f8f2" stroke-opacity="0.8" stroke-width="2.4" stroke-linejoin="round">Брэст</text>
<text x="550.6" y="383.3" textLength="30.2" lengthAdjust="spacingAndGlyphs" font-size="10.2" fill="#3a3a3a" stroke="#3a3a3a" stroke-width="0.12">Брэст</text>
<text x="120.8" y="370" textLength="62.0" lengthAdjust="spacingAndGlyphs" font-size="13" fill="none" stroke="#f8f8f2" stroke-opacity="0.8" stroke-width="2.4" stroke-linejoin="round">Nederland</text>
<text x="120.8" y="370" textLength="62.0" lengthAdjust="spacingAndGlyphs" font-size="13" fill="#85628c" stroke="#85628c" stroke-width="0.12">Nederland</text>
<text x="113.8" y="420" textLength="46.8" lengthAdjust="spacingAndGlyphs" font-size="13" fill="none" stroke="#f8f8f2" stroke-opacity="0.8" stroke-width="2.4" stroke-linejoin="round">België /</text>
<text x="113.8" y="420" textLength="46.8" lengthAdjust="spacingAndGlyphs" font-size="13" fill="#85628c" stroke="#85628c" stroke-width="0.12">België /</text>
<text x="106.5" y="432.3" textLength="60.1" lengthAdjust="spacingAndGlyphs" font-size="13" fill="none" stroke="#f8f8f2" stroke-opacity="0.8" stroke-width="2.4" stroke-linejoin="round">Belgique /</text>
<text x="106.5" y="432.3" textLength="60.1" lengthAdjust="spacingAndGlyphs" font-size="13" fill="#85628c" stroke="#85628c" stroke-width="0.12">Belgique /</text>
<text x="114.3" y="446.5" textLength="45.0" lengthAdjust="spacingAndGlyphs" font-size="13" fill="none" stroke="#f8f8f2" stroke-opacity="0.8" stroke-width="2.4" stroke-linejoin="round">Belgien</text>
<text x="114.3" y="446.5" textLength="45.0" lengthAdjust="spacingAndGlyphs" font-size="13" fill="#85628c" stroke="#85628c" stroke-width="0.12">Belgien</text>
<text x="229.4" y="410.4" textLength="74.3" lengthAdjust="spacingAndGlyphs" font-size="13" fill="none" stroke="#f8f8f2" stroke-opacity="0.8" stroke-width="2.4" stroke-linejoin="round">Deutschland</text>
<text x="229.4" y="410.4" textLength="74.3" lengthAdjust="spacingAndGlyphs" font-size="13" fill="#85628c" stroke="#85628c" stroke-width="0.12">Deutschland</text>
<text x="443.6" y="380.8" textLength="39.2" lengthAdjust="spacingAndGlyphs" font-size="13" fill="none" stroke="#f8f8f2" stroke-opacity="0.8" stroke-width="2.4" stroke-linejoin="round">Polska</text>
<text x="443.6" y="380.8" textLength="39.2" lengthAdjust="spacingAndGlyphs" font-size="13" fill="#85628c" stroke="#85628c" stroke-width="0.12">Polska</text>
<text x="361.4" y="460.6" textLength="36.0" lengthAdjust="spacingAndGlyphs" font-size="13" fill="none" stroke="#f8f8f2" stroke-opacity="0.8" stroke-width="2.4" stroke-linejoin="round">Česko</text>
<text x="361.4" y="460.6" textLength="36.0" lengthAdjust="spacingAndGlyphs" font-size="13" fill="#85628c" stroke="#85628c" stroke-width="0.12">Česko</text>
<text x="331" y="533.3" textLength="62.0" lengthAdjust="spacingAndGlyphs" font-size="13" fill="none" stroke="#f8f8f2" stroke-opacity="0.8" stroke-width="2.4" stroke-linejoin="round">Österreich</text>
<text x="331" y="533.3" textLength="62.0" lengthAdjust="spacingAndGlyphs" font-size="13" fill="#85628c" stroke="#85628c" stroke-width="0.12">Österreich</text>
<text x="443" y="499.6" textLength="59.4" lengthAdjust="spacingAndGlyphs" font-size="13" fill="none" stroke="#f8f8f2" stroke-opacity="0.8" stroke-width="2.4" stroke-linejoin="round">Slovensko</text>
<text x="443" y="499.6" textLength="59.4" lengthAdjust="spacingAndGlyphs" font-size="13" fill="#85628c" stroke="#85628c" stroke-width="0.12">Slovensko</text>
<text x="554.2" y="258.8" textLength="43.6" lengthAdjust="spacingAndGlyphs" font-size="13" fill="none" stroke="#f8f8f2" stroke-opacity="0.8" stroke-width="2.4" stroke-linejoin="round">Lietuva</text>
<text x="554.2" y="258.8" textLength="43.6" lengthAdjust="spacingAndGlyphs" font-size="13" fill="#85628c" stroke="#85628c" stroke-width="0.12">Lietuva</text>
<text x="634.6" y="316.4" textLength="17.4" lengthAdjust="spacingAndGlyphs" font-size="13" fill="none" stroke="#f8f8f2" stroke-opacity="0.8" stroke-width="2.4" stroke-linejoin="round">Бе</text>
<text x="634.6" y="316.4" textLength="17.4" lengthAdjust="spacingAndGlyphs" font-size="13" fill="#85628c" stroke="#85628c" stroke-width="0.12">Бе</text>
<text x="12" y="342.5" textLength="22.0" lengthAdjust="spacingAndGlyphs" font-size="10.2" font-style="italic" fill="none" stroke="#f8f8f2" stroke-opacity="0.8" stroke-width="2.4" stroke-linejoin="round">gland</text>
<text x="12" y="342.5" textLength="22.0" lengthAdjust="spacingAndGlyphs" font-size="10.2" font-style="italic" fill="#85628c" stroke="#85628c" stroke-width="0.12">gland</text>
<text x="197.5" y="354.4" textLength="64.5" lengthAdjust="spacingAndGlyphs" font-size="10.2" font-style="italic" fill="none" stroke="#f8f8f2" stroke-opacity="0.8" stroke-width="2.4" stroke-linejoin="round">Niedersachsen</text>
<text x="197.5" y="354.4" textLength="64.5" lengthAdjust="spacingAndGlyphs" font-size="10.2" font-style="italic" fill="#85628c" stroke="#85628c" stroke-width="0.12">Niedersachsen</text>
<text x="136.7" y="493" textLength="43.0" lengthAdjust="spacingAndGlyphs" font-size="10.2" font-style="italic" fill="none" stroke="#f8f8f2" stroke-opacity="0.8" stroke-width="2.4" stroke-linejoin="round">Grand Est</text>
<text x="136.7" y="493" textLength="43.0" lengthAdjust="spacingAndGlyphs" font-size="10.2" font-style="italic" fill="#85628c" stroke="#85628c" stroke-width="0.12">Grand Est</text>
<text x="43.7" y="527.2" textLength="45.0" lengthAdjust="spacingAndGlyphs" font-size="10.2" font-style="italic" fill="none" stroke="#f8f8f2" stroke-opacity="0.8" stroke-width="2.4" stroke-linejoin="round">Centre-Val</text>
<text x="43.7" y="527.2" textLength="45.0" lengthAdjust="spacingAndGlyphs" font-size="10.2" font-style="italic" fill="#85628c" stroke="#85628c" stroke-width="0.12">Centre-Val</text>
<text x="48" y="539" textLength="35.8" lengthAdjust="spacingAndGlyphs" font-size="10.2" font-style="italic" fill="none" stroke="#f8f8f2" stroke-opacity="0.8" stroke-width="2.4" stroke-linejoin="round">de Loire</text>
<text x="48" y="539" textLength="35.8" lengthAdjust="spacingAndGlyphs" font-size="10.2" font-style="italic" fill="#85628c" stroke="#85628c" stroke-width="0.12">de Loire</text>
<text x="283.2" y="487.5" textLength="30.5" lengthAdjust="spacingAndGlyphs" font-size="10.2" font-style="italic" fill="none" stroke="#f8f8f2" stroke-opacity="0.8" stroke-width="2.4" stroke-linejoin="round">Bayern</text>
<text x="283.2" y="487.5" textLength="30.5" lengthAdjust="spacingAndGlyphs" font-size="10.2" font-style="italic" fill="#85628c" stroke="#85628c" stroke-width="0.12">Bayern</text>
<text x="283.7" y="295.7" textLength="59.3" lengthAdjust="spacingAndGlyphs" font-size="10.2" font-style="italic" fill="none" stroke="#f8f8f2" stroke-opacity="0.8" stroke-width="2.4" stroke-linejoin="round">Mecklenburg-</text>
<text x="283.7" y="295.7" textLength="59.3" lengthAdjust="spacingAndGlyphs" font-size="10.2" font-style="italic" fill="#85628c" stroke="#85628c" stroke-width="0.12">Mecklenburg-</text>
<text x="284.5" y="306" textLength="57.0" lengthAdjust="spacingAndGlyphs" font-size="10.2" font-style="italic" fill="none" stroke="#f8f8f2" stroke-opacity="0.8" stroke-width="2.4" stroke-linejoin="round">Vorpommern</text>
<text x="284.5" y="306" textLength="57.0" lengthAdjust="spacingAndGlyphs" font-size="10.2" font-style="italic" fill="#85628c" stroke="#85628c" stroke-width="0.12">Vorpommern</text>
<text x="221" y="296" textLength="41.0" lengthAdjust="spacingAndGlyphs" font-size="10.2" font-style="italic" fill="none" stroke="#f8f8f2" stroke-opacity="0.8" stroke-width="2.4" stroke-linejoin="round">Schleswig-</text>
<text x="221" y="296" textLength="41.0" lengthAdjust="spacingAndGlyphs" font-size="10.2" font-style="italic" fill="#85628c" stroke="#85628c" stroke-width="0.12">Schleswig-</text>
<text x="213" y="311" textLength="40.0" lengthAdjust="spacingAndGlyphs" font-size="10.2" font-style="italic" fill="none" stroke="#f8f8f2" stroke-opacity="0.8" stroke-width="2.4" stroke-linejoin="round">Holstein</text>
<text x="213" y="311" textLength="40.0" lengthAdjust="spacingAndGlyphs" font-size="10.2" font-style="italic" fill="#85628c" stroke="#85628c" stroke-width="0.12">Holstein</text>
<text x="578.3" y="356" textLength="44.2" lengthAdjust="spacingAndGlyphs" font-size="10.2" font-style="italic" fill="none" stroke="#f8f8f2" stroke-opacity="0.8" stroke-width="2.4" stroke-linejoin="round">Брэсцкая</text>
<text x="578.3" y="356" textLength="44.2" lengthAdjust="spacingAndGlyphs" font-size="10.2" font-style="italic" fill="#85628c" stroke="#85628c" stroke-width="0.12">Брэсцкая</text>
<text x="578.3" y="367.5" textLength="44.2" lengthAdjust="spacingAndGlyphs" font-size="10.2" font-style="italic" fill="none" stroke="#f8f8f2" stroke-opacity="0.8" stroke-width="2.4" stroke-linejoin="round">вобласць</text>
<text x="578.3" y="367.5" textLength="44.2" lengthAdjust="spacingAndGlyphs" font-size="10.2" font-style="italic" fill="#85628c" stroke="#85628c" stroke-width="0.12">вобласць</text>
<circle cx="22.6" cy="392.8" r="2.7" fill="#fff" stroke="#444" stroke-width="0.9"/><circle cx="22.6" cy="392.8" r="1.1" fill="#333"/>
<circle cx="96" cy="424.5" r="2" fill="#fff" stroke="#666" stroke-width="0.8"/>
<circle cx="79" cy="486.5" r="2.7" fill="#fff" stroke="#444" stroke-width="0.9"/><circle cx="79" cy="486.5" r="1.1" fill="#333"/>
<circle cx="165" cy="460.5" r="2.7" fill="#fff" stroke="#444" stroke-width="0.9"/><circle cx="165" cy="460.5" r="1.1" fill="#333"/>
<circle cx="175" cy="329" r="2" fill="#fff" stroke="#666" stroke-width="0.8"/>
<circle cx="357" cy="320.4" r="2" fill="#fff" stroke="#666" stroke-width="0.8"/>
<circle cx="435" cy="333" r="2" fill="#fff" stroke="#666" stroke-width="0.8"/>
<circle cx="410" cy="360.6" r="2" fill="#fff" stroke="#666" stroke-width="0.8"/>
<circle cx="504" cy="366" r="2.7" fill="#fff" stroke="#444" stroke-width="0.9"/><circle cx="504" cy="366" r="1.1" fill="#333"/>
<circle cx="413.8" cy="407.5" r="2" fill="#fff" stroke="#666" stroke-width="0.8"/>
<circle cx="480" cy="444.3" r="2" fill="#fff" stroke="#666" stroke-width="0.8"/>
<circle cx="404" cy="475.5" r="2" fill="#fff" stroke="#666" stroke-width="0.8"/>
<circle cx="351.2" cy="506" r="2" fill="#fff" stroke="#666" stroke-width="0.8"/>
<circle cx="398.7" cy="509.7" r="2.7" fill="#fff" stroke="#444" stroke-width="0.9"/><circle cx="398.7" cy="509.7" r="1.1" fill="#333"/>
<circle cx="539.8" cy="401.6" r="2" fill="#fff" stroke="#666" stroke-width="0.8"/>
<circle cx="601.6" cy="421" r="2" fill="#fff" stroke="#666" stroke-width="0.8"/>
<circle cx="572.6" cy="452" r="2" fill="#fff" stroke="#666" stroke-width="0.8"/>
<circle cx="615.7" cy="506.8" r="2" fill="#fff" stroke="#666" stroke-width="0.8"/>
<circle cx="492.3" cy="271.2" r="2" fill="#fff" stroke="#666" stroke-width="0.8"/>
<circle cx="601" cy="271.2" r="2.7" fill="#fff" stroke="#444" stroke-width="0.9"/><circle cx="601" cy="271.2" r="1.1" fill="#333"/>
<circle cx="449.4" cy="285.6" r="2" fill="#fff" stroke="#666" stroke-width="0.8"/>
<circle cx="565.9" cy="311.7" r="2" fill="#fff" stroke="#666" stroke-width="0.8"/>
<circle cx="552.3" cy="332.9" r="2" fill="#fff" stroke="#666" stroke-width="0.8"/>
<circle cx="564.7" cy="370.6" r="2" fill="#fff" stroke="#666" stroke-width="0.8"/>
<circle cx="236.2" cy="274.4" r="20" fill="rgba(181,226,140,0.6)"/><circle cx="236.2" cy="274.4" r="15" fill="rgba(110,204,57,0.6)"/><text x="236.2" y="278.7" text-anchor="middle" font-size="12" fill="#222">2</text>
<circle cx="326.3" cy="286.5" r="20" fill="rgba(181,226,140,0.6)"/><circle cx="326.3" cy="286.5" r="15" fill="rgba(110,204,57,0.6)"/><text x="326.3" y="290.8" text-anchor="middle" font-size="12" fill="#222">2</text>
<g transform="translate(255.7,264.6)"><path d="M0,22 C-3,15 -9.75,8 -9.75,0 A9.75,9.75 0 0 1 9.75,0 C9.75,8 3,15 0,22 Z" fill="#00508a"/><circle r="6" fill="#fff"/></g>
<g transform="translate(301.7,273.6)"><path d="M0,22 C-3,15 -9.75,8 -9.75,0 A9.75,9.75 0 0 1 9.75,0 C9.75,8 3,15 0,22 Z" fill="#00508a"/><circle r="6" fill="#fff"/></g>
<circle cx="227.7" cy="297.5" r="20" fill="rgba(181,226,140,0.6)"/><circle cx="227.7" cy="297.5" r="15" fill="rgba(110,204,57,0.6)"/><text x="227.7" y="301.8" text-anchor="middle" font-size="12" fill="#222">2</text>
<circle cx="269" cy="303.6" r="20" fill="rgba(181,226,140,0.6)"/><circle cx="269" cy="303.6" r="15" fill="rgba(110,204,57,0.6)"/><text x="269" y="307.90000000000003" text-anchor="middle" font-size="12" fill="#222">3</text>
<g transform="translate(327.8,293.4)"><path d="M0,22 C-3,15 -9.75,8 -9.75,0 A9.75,9.75 0 0 1 9.75,0 C9.75,8 3,15 0,22 Z" fill="#00508a"/><circle r="6" fill="#fff"/></g>
<g transform="translate(246.4,293.8)"><path d="M0,22 C-3,15 -9.75,8 -9.75,0 A9.75,9.75 0 0 1 9.75,0 C9.75,8 3,15 0,22 Z" fill="#00508a"/><circle r="6" fill="#fff"/></g>
<circle cx="260.5" cy="318" r="20" fill="rgba(181,226,140,0.6)"/><circle cx="260.5" cy="318" r="15" fill="rgba(110,204,57,0.6)"/><text x="260.5" y="322.3" text-anchor="middle" font-size="12" fill="#222">2</text>
<circle cx="218.9" cy="333.7" r="20" fill="rgba(181,226,140,0.6)"/><circle cx="218.9" cy="333.7" r="15" fill="rgba(110,204,57,0.6)"/><text x="218.9" y="338.0" text-anchor="middle" font-size="12" fill="#222">2</text>
<g transform="translate(279.5,317)"><path d="M0,22 C-3,15 -9.75,8 -9.75,0 A9.75,9.75 0 0 1 9.75,0 C9.75,8 3,15 0,22 Z" fill="#00508a"/><circle r="6" fill="#fff"/></g>
<g transform="translate(306,330)"><path d="M0,22 C-3,15 -9.75,8 -9.75,0 A9.75,9.75 0 0 1 9.75,0 C9.75,8 3,15 0,22 Z" fill="#00508a"/><circle r="6" fill="#fff"/></g>
<circle cx="328.2" cy="355.5" r="20" fill="rgba(181,226,140,0.6)"/><circle cx="328.2" cy="355.5" r="15" fill="rgba(110,204,57,0.6)"/><text x="328.2" y="359.8" text-anchor="middle" font-size="12" fill="#222">5</text>
<g transform="translate(192.5,334)"><path d="M0,22 C-3,15 -9.75,8 -9.75,0 A9.75,9.75 0 0 1 9.75,0 C9.75,8 3,15 0,22 Z" fill="#00508a"/><circle r="6" fill="#fff"/></g>
<circle cx="264.5" cy="358" r="20" fill="rgba(181,226,140,0.6)"/><circle cx="264.5" cy="358" r="15" fill="rgba(110,204,57,0.6)"/><text x="264.5" y="362.3" text-anchor="middle" font-size="12" fill="#222">3</text>
<circle cx="291.3" cy="362.9" r="20" fill="rgba(181,226,140,0.6)"/><circle cx="291.3" cy="362.9" r="15" fill="rgba(110,204,57,0.6)"/><text x="291.3" y="367.2" text-anchor="middle" font-size="12" fill="#222">3</text>
<circle cx="251" cy="370.2" r="20" fill="rgba(181,226,140,0.6)"/><circle cx="251" cy="370.2" r="15" fill="rgba(110,204,57,0.6)"/><text x="251" y="374.5" text-anchor="middle" font-size="12" fill="#222">4</text>
<circle cx="227.4" cy="375" r="20" fill="rgba(181,226,140,0.6)"/><circle cx="227.4" cy="375" r="15" fill="rgba(110,204,57,0.6)"/><text x="227.4" y="379.3" text-anchor="middle" font-size="12" fill="#222">3</text>
<circle cx="209.7" cy="380.4" r="20" fill="rgba(181,226,140,0.6)"/><circle cx="209.7" cy="380.4" r="15" fill="rgba(110,204,57,0.6)"/><text x="209.7" y="384.7" text-anchor="middle" font-size="12" fill="#222">5</text>
<circle cx="170.7" cy="381.1" r="20" fill="rgba(181,226,140,0.6)"/><circle cx="170.7" cy="381.1" r="15" fill="rgba(110,204,57,0.6)"/><text x="170.7" y="385.40000000000003" text-anchor="middle" font-size="12" fill="#222">2</text>
<g transform="translate(351.7,363.6)"><path d="M0,22 C-3,15 -9.75,8 -9.75,0 A9.75,9.75 0 0 1 9.75,0 C9.75,8 3,15 0,22 Z" fill="#00508a"/><circle r="6" fill="#fff"/></g>
<g transform="translate(241.3,377.5)"><path d="M0,22 C-3,15 -9.75,8 -9.75,0 A9.75,9.75 0 0 1 9.75,0 C9.75,8 3,15 0,22 Z" fill="#00508a"/><circle r="6" fill="#fff"/></g>
<circle cx="185.3" cy="403" r="20" fill="rgba(241,211,87,0.6)"/><circle cx="185.3" cy="403" r="15" fill="rgba(240,194,12,0.6)"/><text x="185.3" y="407.3" text-anchor="middle" font-size="12" fill="#222">14</text>
<circle cx="292" cy="405.6" r="20" fill="rgba(181,226,140,0.6)"/><circle cx="292" cy="405.6" r="15" fill="rgba(110,204,57,0.6)"/><text x="292" y="409.90000000000003" text-anchor="middle" font-size="12" fill="#222">6</text>
<circle cx="341.3" cy="410.5" r="20" fill="rgba(181,226,140,0.6)"/><circle cx="341.3" cy="410.5" r="15" fill="rgba(110,204,57,0.6)"/><text x="341.3" y="414.8" text-anchor="middle" font-size="12" fill="#222">2</text>
<g transform="translate(269.5,391.5)"><path d="M0,22 C-3,15 -9.75,8 -9.75,0 A9.75,9.75 0 0 1 9.75,0 C9.75,8 3,15 0,22 Z" fill="#00508a"/><circle r="6" fill="#fff"/></g>
<circle cx="317" cy="418.4" r="20" fill="rgba(181,226,140,0.6)"/><circle cx="317" cy="418.4" r="15" fill="rgba(110,204,57,0.6)"/><text x="317" y="422.7" text-anchor="middle" font-size="12" fill="#222">2</text>
<g transform="translate(164.6,397.7)"><path d="M0,22 C-3,15 -9.75,8 -9.75,0 A9.75,9.75 0 0 1 9.75,0 C9.75,8 3,15 0,22 Z" fill="#00508a"/><circle r="6" fill="#fff"/></g>
<g transform="translate(245.7,405.5)"><path d="M0,22 C-3,15 -9.75,8 -9.75,0 A9.75,9.75 0 0 1 9.75,0 C9.75,8 3,15 0,22 Z" fill="#00508a"/><circle r="6" fill="#fff"/></g>
<g transform="translate(198.7,412.8)"><path d="M0,22 C-3,15 -9.75,8 -9.75,0 A9.75,9.75 0 0 1 9.75,0 C9.75,8 3,15 0,22 Z" fill="#00508a"/><circle r="6" fill="#fff"/></g>
<circle cx="292.9" cy="442.1" r="20" fill="rgba(181,226,140,0.6)"/><circle cx="292.9" cy="442.1" r="15" fill="rgba(110,204,57,0.6)"/><text x="292.9" y="446.40000000000003" text-anchor="middle" font-size="12" fill="#222">2</text>
<circle cx="219.2" cy="443.6" r="20" fill="rgba(181,226,140,0.6)"/><circle cx="219.2" cy="443.6" r="15" fill="rgba(110,204,57,0.6)"/><text x="219.2" y="447.90000000000003" text-anchor="middle" font-size="12" fill="#222">9</text>
<g transform="translate(251.8,432.7)"><path d="M0,22 C-3,15 -9.75,8 -9.75,0 A9.75,9.75 0 0 1 9.75,0 C9.75,8 3,15 0,22 Z" fill="#00508a"/><circle r="6" fill="#fff"/></g>
<circle cx="276.4" cy="459.5" r="20" fill="rgba(181,226,140,0.6)"/><circle cx="276.4" cy="459.5" r="15" fill="rgba(110,204,57,0.6)"/><text x="276.4" y="463.8" text-anchor="middle" font-size="12" fill="#222">3</text>
<circle cx="220.9" cy="468.7" r="20" fill="rgba(181,226,140,0.6)"/><circle cx="220.9" cy="468.7" r="15" fill="rgba(110,204,57,0.6)"/><text x="220.9" y="473.0" text-anchor="middle" font-size="12" fill="#222">6</text>
<g transform="translate(184.4,451.7)"><path d="M0,22 C-3,15 -9.75,8 -9.75,0 A9.75,9.75 0 0 1 9.75,0 C9.75,8 3,15 0,22 Z" fill="#00508a"/><circle r="6" fill="#fff"/></g>
<g transform="translate(300.5,459.5)"><path d="M0,22 C-3,15 -9.75,8 -9.75,0 A9.75,9.75 0 0 1 9.75,0 C9.75,8 3,15 0,22 Z" fill="#00508a"/><circle r="6" fill="#fff"/></g>
<circle cx="236.7" cy="487.7" r="20" fill="rgba(181,226,140,0.6)"/><circle cx="236.7" cy="487.7" r="15" fill="rgba(110,204,57,0.6)"/><text x="236.7" y="492.0" text-anchor="middle" font-size="12" fill="#222">5</text>
<g transform="translate(206.8,477.7)"><path d="M0,22 C-3,15 -9.75,8 -9.75,0 A9.75,9.75 0 0 1 9.75,0 C9.75,8 3,15 0,22 Z" fill="#00508a"/><circle r="6" fill="#fff"/></g>
<g transform="translate(253.8,481)"><path d="M0,22 C-3,15 -9.75,8 -9.75,0 A9.75,9.75 0 0 1 9.75,0 C9.75,8 3,15 0,22 Z" fill="#00508a"/><circle r="6" fill="#fff"/></g>
<circle cx="281.8" cy="507.2" r="20" fill="rgba(181,226,140,0.6)"/><circle cx="281.8" cy="507.2" r="15" fill="rgba(110,204,57,0.6)"/><text x="281.8" y="511.5" text-anchor="middle" font-size="12" fill="#222">2</text>
<circle cx="203.8" cy="522.3" r="20" fill="rgba(181,226,140,0.6)"/><circle cx="203.8" cy="522.3" r="15" fill="rgba(110,204,57,0.6)"/><text x="203.8" y="526.5999999999999" text-anchor="middle" font-size="12" fill="#222">2</text>
<circle cx="253" cy="524.7" r="20" fill="rgba(181,226,140,0.6)"/><circle cx="253" cy="524.7" r="15" fill="rgba(110,204,57,0.6)"/><text x="253" y="529.0" text-anchor="middle" font-size="12" fill="#222">2</text>
</svg>
<div id="zc" class="abs"><div class="zb"></div><div class="zb"></div><svg width="26" height="52" style="position:absolute;left:0;top:0"><rect x="7.6" y="11.9" width="11.4" height="2.3" fill="#1a1a1a"/><rect x="12.1" y="8.2" width="2.4" height="10" fill="#1a1a1a"/><rect x="9" y="37.9" width="10" height="2.4" fill="#1a1a1a"/></svg></div>
<div id="fs" class="abs"><svg width="26" height="26" viewBox="0 0 26 26" style="position:absolute;left:0;top:0"><path d="M6,11 V6 H11 M15,6 H20 V11 M20,15 V20 H15 M11,20 H6 V15" fill="none" stroke="#2a2a2a" stroke-width="2.2" stroke-linecap="butt"/></svg></div>
</div>
<div id="count" class="abs">109 Termine</div>
<div id="month" class="abs">März 2026</div>
</body></html>
